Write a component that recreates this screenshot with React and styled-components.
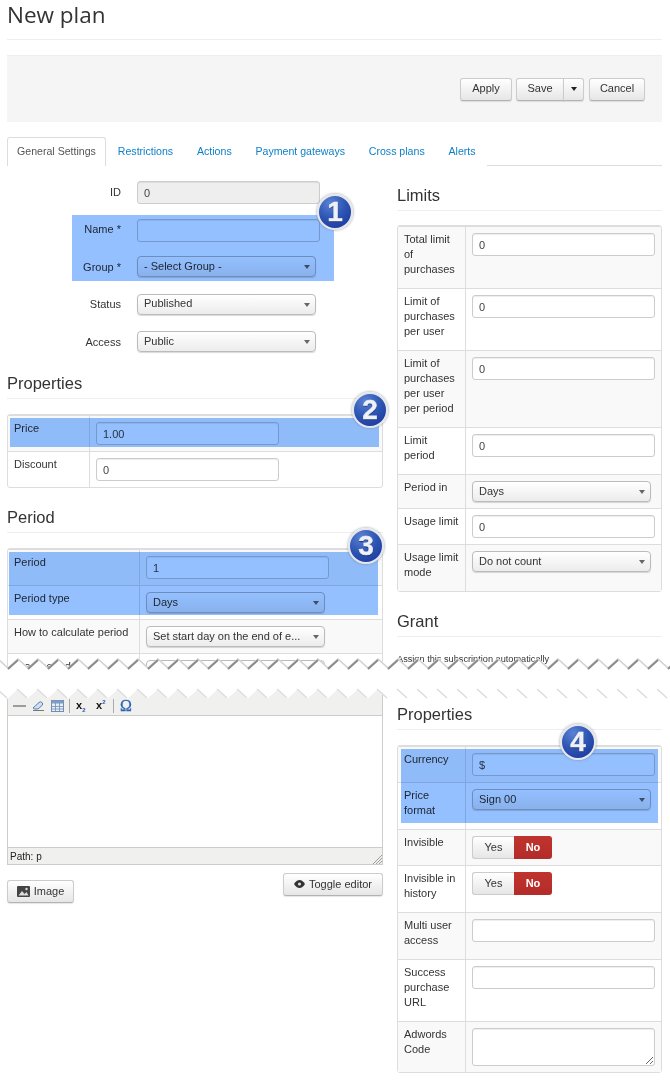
import React from "react";
import styled, { createGlobalStyle } from "styled-components";

const GlobalStyle = createGlobalStyle`
  html, body {
    margin: 0;
    background: #fff;
    font-family: "Liberation Sans", Arial, sans-serif;
    font-size: 11px;
    line-height: 15px;
    color: #333;
  }
`;

const Page = styled.div`
  position: relative;
  width: 670px;
  height: 1083px;
  overflow: hidden;
`;

const TopPiece = styled.div`
  height: 690px;
  padding: 0 8px 0 7px;
  overflow: hidden;
`;

const BottomPiece = styled.div`
  padding: 0 8px 0 7px;
`;

const Title = styled.h1`
  margin: 0;
  height: 39px;
  border-bottom: 1px solid #eee;
  font-family: "Open Sans", sans-serif;
  font-size: 22.5px;
  font-weight: 400;
  line-height: 29px;
  color: #333;
`;

const Toolbar = styled.div`
  display: flex;
  justify-content: flex-end;
  align-items: center;
  gap: 4px;
  height: 67px;
  margin-top: 15px;
  padding-right: 17px;
  box-sizing: border-box;
  background: #f5f5f5;
  border-top: 1px solid #eee;
`;

const Button = styled.button`
  display: inline-flex;
  align-items: center;
  justify-content: center;
  gap: 4px;
  box-sizing: border-box;
  width: ${({ $w }) => $w}px;
  height: 23px;
  padding: 0 0 1px;
  margin-top: ${({ $top }) => $top || 0}px;
  font: inherit;
  color: #333;
  background: linear-gradient(#fff, #e6e6e6);
  border: 1px solid #ccc;
  border-bottom-color: #b3b3b3;
  border-radius: 3px;
  box-shadow: 0 1px 1px rgba(0, 0, 0, 0.1);
`;

const SaveGroup = styled.div`
  display: flex;
  margin-right: 1px;

  ${Button}:first-child {
    border-radius: 3px 0 0 3px;
  }

  ${Button}:last-child {
    margin-left: -1px;
    border-radius: 0 3px 3px 0;
  }
`;

const Caret = styled.span`
  width: 0;
  height: 0;
  border-left: 3px solid transparent;
  border-right: 3px solid transparent;
  border-top: 4px solid #222;
`;

const Tabs = styled.ul`
  display: flex;
  height: 29px;
  margin: 15px 0 0;
  padding: 0;
  box-sizing: border-box;
  list-style: none;
  border-bottom: 1px solid #ddd;
  font-size: 10.6px;
`;

const Tab = styled.li`
  box-sizing: border-box;
  height: 29px;
  padding: 6px ${({ $active }) => ($active ? "9px" : "10.9px")} 0;
  color: ${({ $active }) => ($active ? "#555" : "#0d7fc9")};
  background: #fff;
  border: 1px solid ${({ $active }) => ($active ? "#ddd" : "transparent")};
  border-bottom: none;
  border-radius: 3px 3px 0 0;
`;

const Columns = styled.div`
  display: grid;
  grid-template-columns: 376px 265px;
  column-gap: 14px;
`;

const Form = styled.div`
  margin-top: 15px;
`;

const FormRow = styled.div`
  display: grid;
  grid-template-columns: 114px 183px;
  column-gap: 16px;
  height: 37.5px;
`;

const FormLabel = styled.label`
  padding-top: 3.5px;
  text-align: right;
`;

const Heading = styled.h3`
  margin: ${({ $top }) => $top}px 0 ${({ $bottom }) => $bottom ?? 15}px;
  padding-bottom: 5px;
  border-bottom: 1px solid #eee;
  font-size: 16.5px;
  font-weight: 400;
  line-height: 20px;
  color: #333;
`;

const TextInput = styled.input`
  display: block;
  box-sizing: border-box;
  width: 183px;
  height: 23px;
  padding: 0 6px;
  font: inherit;
  color: #444;
  background: ${({ disabled }) => (disabled ? "#eee" : "#fff")};
  border: 1px solid #ccc;
  border-radius: 3px;
  box-shadow: inset 0 1px 1px rgba(0, 0, 0, 0.075);
`;

const TextArea = styled.textarea`
  display: block;
  box-sizing: border-box;
  width: 183px;
  height: 38px;
  padding: 3px 6px;
  font: inherit;
  background: #fff;
  border: 1px solid #ccc;
  border-radius: 3px;
  box-shadow: inset 0 1px 1px rgba(0, 0, 0, 0.075);
`;

const SelectBox = styled.div`
  position: relative;
  box-sizing: border-box;
  width: 179px;
  height: 21px;
  padding: 1.5px 6px;
  color: #333;
  white-space: nowrap;
  background: linear-gradient(#fff, #ececec);
  border: 1px solid #bbb;
  border-radius: 4px;
  box-shadow: 0 1px 1px rgba(0, 0, 0, 0.15);

  &::after {
    content: "";
    position: absolute;
    top: 8px;
    right: 5px;
    border-left: 3.5px solid transparent;
    border-right: 3.5px solid transparent;
    border-top: 4px solid #666;
  }
`;

const DataTable = styled.table`
  width: 100%;
  table-layout: fixed;
  border-collapse: separate;
  border-spacing: 0;
  border: 1px solid #ddd;
  border-radius: 3px;

  tbody tr:nth-child(odd) td {
    background: #f9f9f9;
  }
`;

const LabelCell = styled.td`
  box-sizing: border-box;
  width: ${({ $w }) => $w}px;
  padding: 5px 6px 11px;
  vertical-align: top;
  border-top: 1px solid #ddd;
`;

const ValueCell = styled.td`
  padding: 6px;
  vertical-align: top;
  border-top: 1px solid #ddd;
  border-left: 1px solid #ddd;
`;

const Note = styled.p`
  margin: 0;
  font-size: 9.2px;
`;

const Toggle = styled.div`
  display: flex;
  height: 23px;
`;

const ToggleYes = styled.span`
  box-sizing: border-box;
  width: 42px;
  padding-top: 3px;
  text-align: center;
  background: linear-gradient(#fff, #e6e6e6);
  border: 1px solid #ccc;
  border-right: none;
  border-radius: 3px 0 0 3px;
`;

const ToggleNo = styled.span`
  box-sizing: border-box;
  width: 38px;
  padding-top: 4px;
  text-align: center;
  font-weight: 700;
  color: #fff;
  background: linear-gradient(#c0332f, #b32c29);
  border-radius: 0 3px 3px 0;
`;

const Editor = styled.div`
  box-sizing: border-box;
  border: 1px solid #ccc;
  border-top: none;
`;

const EditorBar = styled.div`
  display: flex;
  align-items: center;
  height: 26px;
  padding: 6px 0 0 5px;
  box-sizing: border-box;
  background: #f0f0ee;
  border-bottom: 1px solid #ccc;
`;

const BarIcon = styled.svg`
  display: block;
  flex: none;
  margin-right: ${({ $gap }) => $gap}px;
`;

const BarSeparator = styled.span`
  width: 1px;
  height: 14px;
  margin: 0 6px 0 0;
  background: #aaa;
`;

const Script = styled.span`
  width: ${({ $w }) => $w}px;
  font-size: 11px;
  font-weight: 700;
  color: #111;

  sub, sup {
    font-size: 6px;
    line-height: 0;
    color: #35a;
  }
`;

const Omega = styled.span`
  font-family: "Liberation Serif", serif;
  font-size: 16px;
  font-weight: 400;
  color: #2a64b0;
  -webkit-text-stroke: 0.3px #2a64b0;
`;

const EditorBody = styled.div`
  height: 131px;
  background: #fff;
`;

const EditorStatus = styled.div`
  position: relative;
  box-sizing: border-box;
  height: 17px;
  padding: 1px 2px;
  font-size: 10px;
  color: #222;
  background: #f0f0ee;
  border-top: 1px solid #ccc;
`;

const Grip = styled.svg`
  position: absolute;
  right: 0;
  bottom: 0;
`;

const EditorActions = styled.div`
  display: flex;
  justify-content: space-between;
  align-items: flex-start;
`;

const Highlight = styled.div`
  position: absolute;
  left: ${({ $x }) => $x}px;
  top: ${({ $y }) => $y}px;
  width: ${({ $w }) => $w}px;
  height: ${({ $h }) => $h}px;
  background: #94c0ff;
  mix-blend-mode: multiply;
`;

const Badge = styled.div`
  position: absolute;
  left: ${({ $x }) => $x - 18}px;
  top: ${({ $y }) => $y - 18}px;
  display: flex;
  align-items: center;
  justify-content: center;
  box-sizing: border-box;
  width: 36px;
  height: 36px;
  font-size: 28px;
  font-weight: 700;
  line-height: 1;
  color: #eef1f8;
  -webkit-text-stroke: 0.4px #eef1f8;
  text-shadow: 0 1px 1px rgba(0, 0, 30, 0.6);
  background: radial-gradient(circle at 35% 22%, #5a82d4 0%, #2f57b4 45%, #15309a 100%);
  border: 2px solid #e4e6ea;
  border-radius: 50%;
  box-shadow: 0 0 2px 1px rgba(120, 130, 150, 0.4);
`;

const Tear = styled.svg`
  position: absolute;
  left: 0;
  top: 650px;
`;

const PEAKS = Array.from({ length: 36 }, (_, i) => i * 20 - 22);

const zigzag = (offset, peak, valley) =>
  PEAKS.flatMap((x) => [`${x + offset},${peak}`, `${x + offset + 10},${valley}`]);

const topEdge = zigzag(0, 8, 17);
const bottomEdge = zigzag(-1, 40, 49);

// the shadow sits mostly on one slope of each tooth
const topShadow = PEAKS.map((x) => `M${x - 10} 19L${x} 10`).join("");
const bottomShadow = PEAKS.map((x) => `M${x - 1} 39L${x + 9} 48`).join("");

function TornEdge() {
  return (
    <Tear width="670" height="55" viewBox="0 0 670 55">
      <defs>
        <filter id="soft" x="-5%" y="-50%" width="110%" height="200%">
          <feGaussianBlur stdDeviation="0.7" />
        </filter>
      </defs>
      <polygon points={[...topEdge, ...[...bottomEdge].reverse()].join(" ")} fill="#fff" />
      <polyline
        points={topEdge.join(" ")}
        transform="translate(0 1)"
        fill="none"
        stroke="#d0d0d0"
        strokeWidth="1.5"
        filter="url(#soft)"
      />
      <path d={topShadow} fill="none" stroke="#8c8c8c" strokeWidth="2" filter="url(#soft)" />
      <path d={bottomShadow} fill="none" stroke="#dcdcdc" strokeWidth="1.5" filter="url(#soft)" />
    </Tear>
  );
}

function Row({ label, w, children }) {
  return (
    <tr>
      <LabelCell $w={w}>{label}</LabelCell>
      <ValueCell>{children}</ValueCell>
    </tr>
  );
}

function YesNo() {
  return (
    <Toggle>
      <ToggleYes>Yes</ToggleYes>
      <ToggleNo>No</ToggleNo>
    </Toggle>
  );
}

function App() {
  return (
    <Page>
      <GlobalStyle />
      <TopPiece>
        <Title>New plan</Title>
        <Toolbar>
          <Button $w={52}>Apply</Button>
          <SaveGroup>
            <Button $w={48}>Save</Button>
            <Button $w={21}>
              <Caret />
            </Button>
          </SaveGroup>
          <Button $w={56}>Cancel</Button>
        </Toolbar>
        <Tabs>
          <Tab $active>General Settings</Tab>
          <Tab>Restrictions</Tab>
          <Tab>Actions</Tab>
          <Tab>Payment gateways</Tab>
          <Tab>Cross plans</Tab>
          <Tab>Alerts</Tab>
        </Tabs>
        <Columns>
          <div>
            <Form>
              <FormRow>
                <FormLabel>ID</FormLabel>
                <TextInput disabled defaultValue="0" />
              </FormRow>
              <FormRow>
                <FormLabel>Name *</FormLabel>
                <TextInput />
              </FormRow>
              <FormRow>
                <FormLabel>Group *</FormLabel>
                <SelectBox>- Select Group -</SelectBox>
              </FormRow>
              <FormRow>
                <FormLabel>Status</FormLabel>
                <SelectBox>Published</SelectBox>
              </FormRow>
              <FormRow>
                <FormLabel>Access</FormLabel>
                <SelectBox>Public</SelectBox>
              </FormRow>
            </Form>
            <Heading $top={4.5}>Properties</Heading>
            <DataTable>
              <tbody>
                <Row label="Price" w={81}>
                  <TextInput defaultValue="1.00" />
                </Row>
                <Row label="Discount" w={81}>
                  <TextInput defaultValue="0" />
                </Row>
              </tbody>
            </DataTable>
            <Heading $top={19}>Period</Heading>
            <DataTable>
              <tbody>
                <Row label="Period" w={131}>
                  <TextInput defaultValue="1" />
                </Row>
                <Row label="Period type" w={131}>
                  <SelectBox>Days</SelectBox>
                </Row>
                <Row label="How to calculate period" w={131}>
                  <SelectBox>Set start day on the end of e...</SelectBox>
                </Row>
                <Row label="Start period" w={131}>
                  <SelectBox />
                </Row>
              </tbody>
            </DataTable>
          </div>
          <div>
            <Heading $top={19} $bottom={14}>Limits</Heading>
            <DataTable>
              <tbody>
                <Row label="Total limit of purchases" w={67}>
                  <TextInput defaultValue="0" />
                </Row>
                <Row label="Limit of purchases per user" w={67}>
                  <TextInput defaultValue="0" />
                </Row>
                <Row label="Limit of purchases per user per period" w={67}>
                  <TextInput defaultValue="0" />
                </Row>
                <Row label="Limit period" w={67}>
                  <TextInput defaultValue="0" />
                </Row>
                <Row label="Period in" w={67}>
                  <SelectBox>Days</SelectBox>
                </Row>
                <Row label="Usage limit" w={67}>
                  <TextInput defaultValue="0" />
                </Row>
                <Row label="Usage limit mode" w={67}>
                  <SelectBox>Do not count</SelectBox>
                </Row>
              </tbody>
            </DataTable>
            <Heading $top={19}>Grant</Heading>
            <Note>Assign this subscription automatically</Note>
          </div>
        </Columns>
      </TopPiece>
      <BottomPiece>
        <Columns>
          <div>
            <Editor>
              <EditorBar>
                <BarIcon $gap={6} width="13" height="12" viewBox="0 0 13 12">
                  <line x1="0" y1="6" x2="13" y2="6" stroke="#666" strokeWidth="1.2" />
                </BarIcon>
                <BarIcon $gap={7} width="12" height="12" viewBox="0 0 12 12">
                  <path d="M1 8 7 2.5Q8.5 1 10 2.5Q11.500 4 10 5.500L6 9H2.500Z" fill="#cfe0f5" stroke="#5b7fa8" />
                  <line x1="1" y1="10.500" x2="12" y2="10.500" stroke="#777" />
                </BarIcon>
                <BarIcon $gap={5} width="13" height="12" viewBox="0 0 13 12">
                  <rect x="0.500" y="0.500" width="12" height="11" fill="#e8eef6" stroke="#6f8db5" />
                  <rect x="0.500" y="0.500" width="12" height="3" fill="#7f9cc4" />
                  <path d="M0 6.500H13M0 9H13M4.500 3V12M8.500 3V12" stroke="#6f8db5" strokeWidth="0.800" />
                </BarIcon>
                <BarSeparator />
                <Script $w={20}>
                  x<sub>2</sub>
                </Script>
                <Script $w={17}>
                  x<sup>2</sup>
                </Script>
                <BarSeparator />
                <Omega>Ω</Omega>
              </EditorBar>
              <EditorBody />
              <EditorStatus>
                Path: p
                <Grip width="10" height="10" viewBox="0 0 10 10">
                  <path d="M10 1 1 10M10 4 4 10M10 7 7 10" stroke="#888" strokeWidth="0.800" />
                </Grip>
              </EditorStatus>
            </Editor>
            <EditorActions>
              <Button $w={67} $top={15}>
                <svg width="13" height="11" viewBox="0 0 13 11">
                  <rect width="13" height="11" rx="1" fill="#444" />
                  <path d="M1.500 9.500 5 5l2.500 3L9.500 6l2 3.500Z" fill="#ddd" />
                  <circle cx="9.500" cy="3" r="1.200" fill="#ddd" />
                </svg>
                Image
              </Button>
              <Button $w={100} $top={8}>
                <svg width="11" height="8" viewBox="0 0 11 8">
                  <path d="M0 4Q2.500 0 5.500 0T11 4Q8.500 8 5.500 8T0 4Z" fill="#333" />
                  <circle cx="5.500" cy="4" r="1.600" fill="#ddd" />
                </svg>
                Toggle editor
              </Button>
            </EditorActions>
          </div>
          <div>
            <Heading $top={14}>Properties</Heading>
            <DataTable>
              <tbody>
                <Row label="Currency" w={67}>
                  <TextInput defaultValue="$" />
                </Row>
                <Row label="Price format" w={67}>
                  <SelectBox>Sign 00</SelectBox>
                </Row>
                <Row label="Invisible" w={67}>
                  <YesNo />
                </Row>
                <Row label="Invisible in history" w={67}>
                  <YesNo />
                </Row>
                <Row label="Multi user access" w={67}>
                  <TextInput />
                </Row>
                <Row label="Success purchase URL" w={67}>
                  <TextInput />
                </Row>
                <Row label="Adwords Code" w={67}>
                  <TextArea />
                </Row>
              </tbody>
            </DataTable>
          </div>
        </Columns>
      </BottomPiece>
      <TornEdge />
      <Highlight $x={72} $y={215} $w={262} $h={66} />
      <Highlight $x={10} $y={418} $w={369} $h={29} />
      <Highlight $x={9} $y={552} $w={369} $h={63} />
      <Highlight $x={401} $y={749} $w={257} $h={74} />
      <Badge $x={335} $y={212}>1</Badge>
      <Badge $x={370} $y={410}>2</Badge>
      <Badge $x={366} $y={546}>3</Badge>
      <Badge $x={578} $y={742}>4</Badge>
    </Page>
  );
}

export default App;
